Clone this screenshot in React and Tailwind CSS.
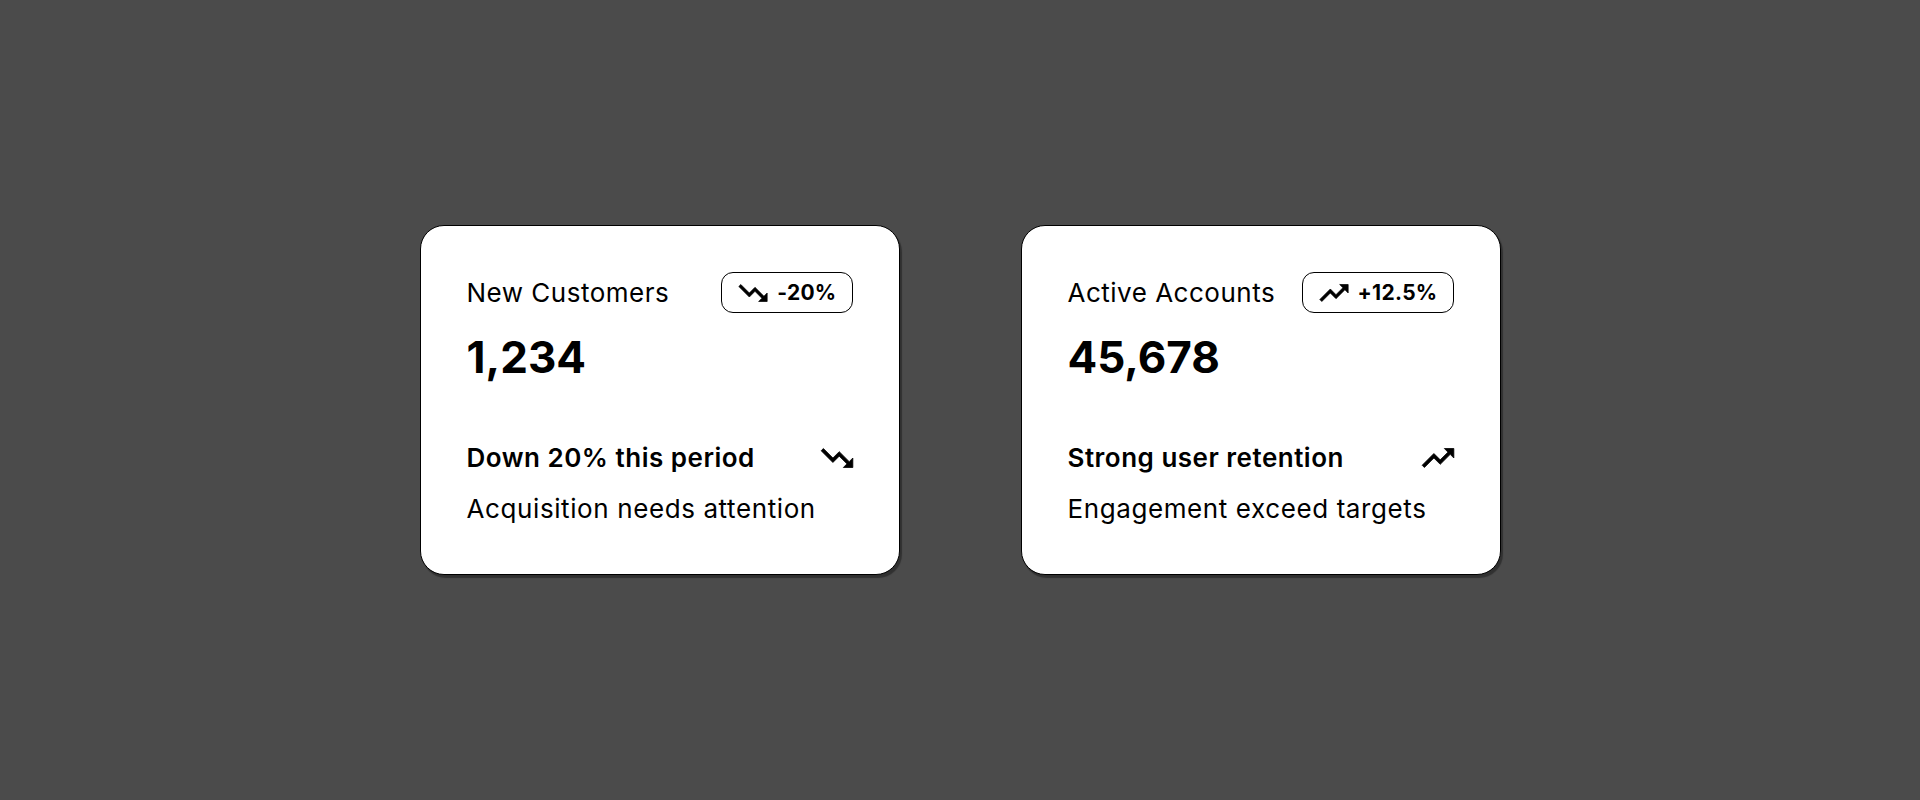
import React from "react";

// Material-style trend glyphs with a solid arrowhead
function TrendUp({ className }) {
  return (
    <svg
      viewBox="0 0 24 24"
      className={className}
      fill="currentColor"
      stroke="currentColor"
      strokeWidth="0.5"
      strokeLinejoin="miter"
      aria-hidden="true"
    >
      <path d="M16 6l2.29 2.29-4.88 4.88-4-4L2 16.59 3.41 18l6-6 4 4 6.3-6.29L22 12V6z" />
    </svg>
  );
}

function TrendDown({ className }) {
  return (
    <svg
      viewBox="0 0 24 24"
      className={className}
      fill="currentColor"
      stroke="currentColor"
      strokeWidth="0.5"
      strokeLinejoin="miter"
      aria-hidden="true"
    >
      <path d="M16 18l2.29-2.29-4.88-4.88-4 4L2 7.41 3.41 6l6 6 4-4 6.3 6.29L22 12v6z" />
    </svg>
  );
}

const cards = [
  {
    title: "New Customers",
    value: "1,234",
    change: "-20%",
    up: false,
    headline: "Down 20% this period",
    note: "Acquisition needs attention",
  },
  {
    title: "Active Accounts",
    value: "45,678",
    change: "+12.5%",
    up: true,
    headline: "Strong user retention",
    note: "Engagement exceed targets",
  },
];

function StatCard({ title, value, change, up, headline, note }) {
  const Icon = up ? TrendUp : TrendDown;
  return (
    <div className="w-[480px] h-[350px] rounded-3xl border border-black bg-white p-[46px] flex flex-col shadow-[2px_3px_1px_rgba(0,0,0,0.35)]">
      <div className="flex items-center justify-between h-[41px]">
        <span className="text-[26px] leading-[36px] tracking-[0.5px] text-black">{title}</span>
        <span className="h-[41px] flex items-center gap-[7px] rounded-[12px] border border-black pl-[14px] pr-[15px] text-[21px] font-bold tracking-[0.3px] text-black">
          <Icon className="w-[34px] h-[34px]" />
          {change}
        </span>
      </div>
      <div className="mt-[22px] text-[44px] leading-[44px] font-bold text-black">
        {value}
      </div>
      <div className="mt-auto flex flex-col gap-3">
        <div className="flex items-center justify-between">
          <span className="text-[26px] leading-[39px] font-semibold tracking-[0.5px] text-black">{headline}</span>
          <Icon className="w-[38px] h-[38px] -mr-[3px]" />
        </div>
        <span className="text-[26px] leading-[39px] tracking-[0.6px] text-black">{note}</span>
      </div>
    </div>
  );
}

export default function App() {
  return (
    <div
      className="w-full h-[800px] bg-[#4b4b4b] flex items-center justify-center gap-[121px]"
      style={{ fontFamily: "Inter, 'Liberation Sans', sans-serif" }}
    >
      {cards.map((c) => (
        <StatCard key={c.title} {...c} />
      ))}
    </div>
  );
}
